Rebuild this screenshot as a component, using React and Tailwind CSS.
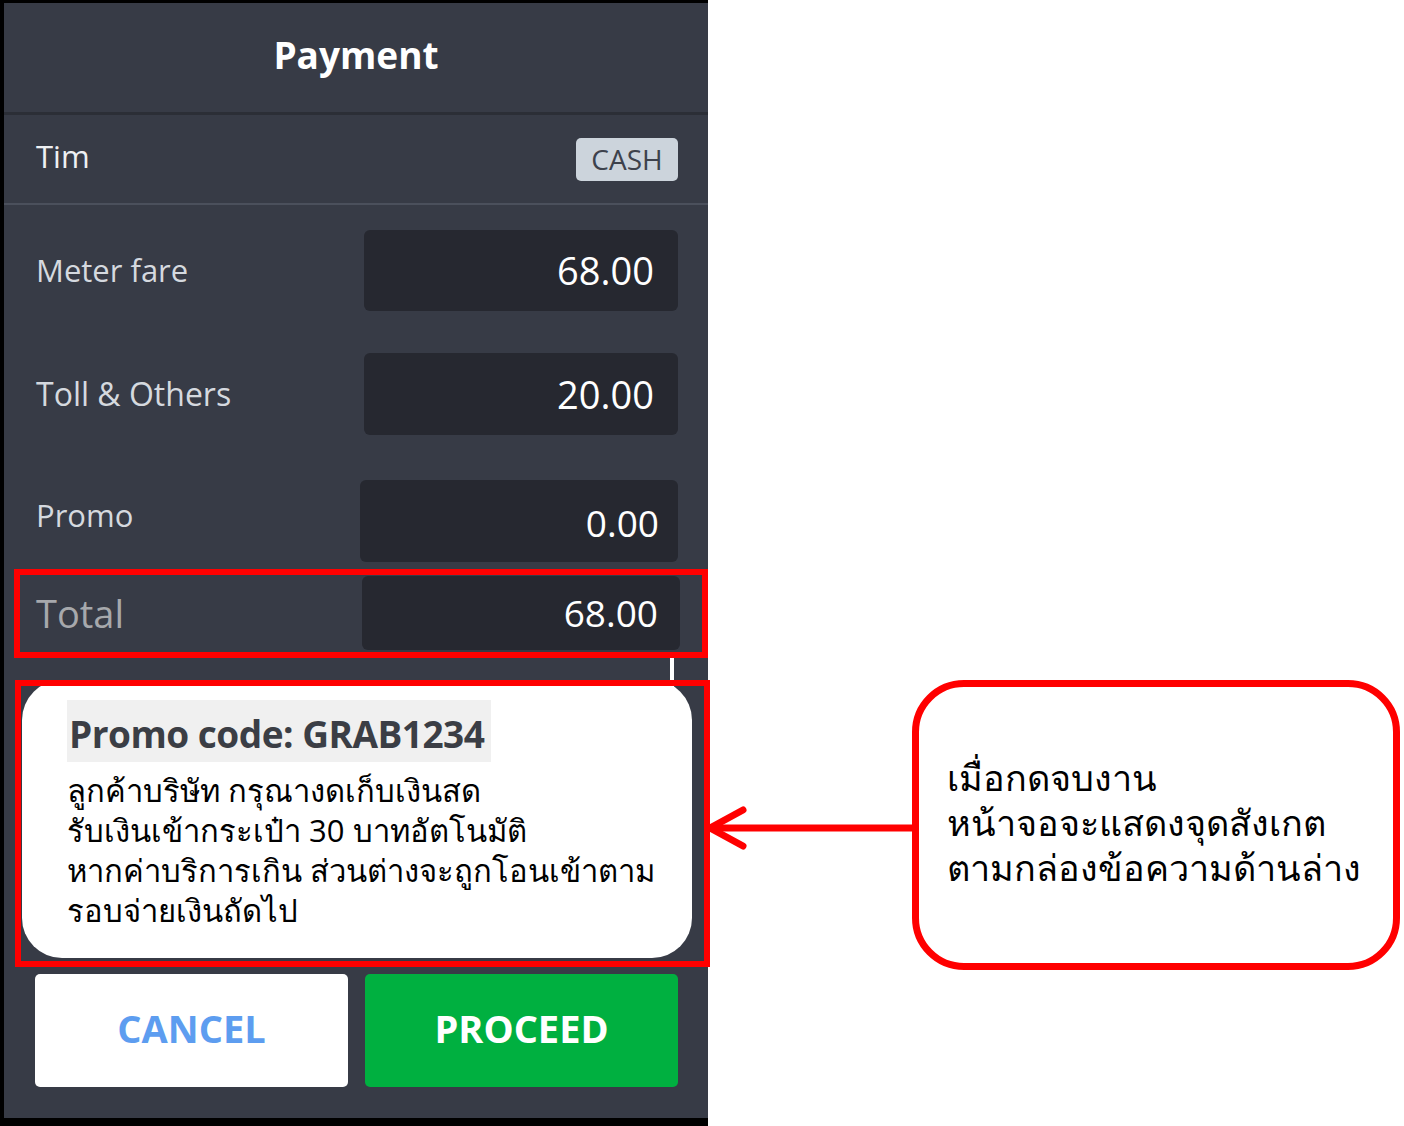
import React from 'react';

const FONT = { fontFamily: '"Open Sans", "Noto Sans", "DejaVu Sans", sans-serif' };

function FareRow({ label, value, boxClass, labelClass }) {
    return (
        <div className="flex items-center">
            <span className={`pl-[32px] ${labelClass}`}>{label}</span>
            <div className={`ml-auto flex items-center justify-end rounded-[6px] bg-[#262830] text-white ${boxClass}`}>
                {value}
            </div>
        </div>
    );
}

export default function App() {
    return (
        <div className="relative flex w-[1404px] h-[1126px] bg-white overflow-hidden" style={FONT}>
            {/* phone screen */}
            <div className="relative w-[708px] h-[1126px] shrink-0 bg-black pt-[3px] pl-[4px] pb-[8px]">
                <div className="relative h-full bg-[#373b46] flex flex-col">
                    <div className="h-[112px] shrink-0 flex items-center justify-center border-b-[3px] border-[#2b2e36]">
                        <h1 className="text-[37px] font-bold text-white -mt-[6px]">Payment</h1>
                    </div>
                    <div className="h-[90px] shrink-0 flex items-center justify-between pl-[32px] pr-[30px] border-b-[2px] border-[#4b505c]">
                        <span className="text-[31px] text-[#eef0f3] -mt-[6px]">Tim</span>
                        <span className="h-[43px] w-[102px] flex items-center justify-center rounded-[5px] bg-[#ccd4dc] text-[28px] text-[#3d424c]">CASH</span>
                    </div>

                    <div className="mt-[25px]">
                        <FareRow label="Meter fare" value="68.00" labelClass="text-[31px] text-[#d5d9df]" boxClass="w-[314px] h-[81px] mr-[30px] pr-[24px] text-[38px]" />
                    </div>
                    <div className="mt-[42px]">
                        <FareRow label="Toll & Others" value="20.00" labelClass="text-[32px] text-[#d5d9df]" boxClass="w-[314px] h-[82px] mr-[30px] pr-[24px] text-[38px]" />
                    </div>
                    <div className="mt-[45px]">
                        <FareRow label="Promo" value="0.00" labelClass="text-[31px] text-[#d5d9df] -mt-[12px]" boxClass="w-[318px] h-[82px] mr-[30px] pr-[19px] pt-[4px] text-[37px]" />
                    </div>
                    <div className="mt-[14px]">
                        <FareRow label="Total" value="68.00" labelClass="text-[38px] text-[#a6a8ac]" boxClass="w-[318px] h-[74px] mr-[28px] pr-[22px] text-[37px]" />
                    </div>

                    {/* promo note card */}
                    <div className="mt-[30px] ml-[18px] w-[670px] h-[278px] rounded-[40px] bg-white pt-[20px] pl-[45px]">
                        <div className="inline-block bg-[#f0f0f0] h-[62px] w-[424px] pl-[2px] pt-[6px] text-[37px] font-bold text-[#3b3e45] tracking-[-0.5px]">
                            Promo code: GRAB1234
                        </div>
                        <div className="mt-[8px] text-[31px] leading-[40px] text-black">
                            <p>ลูกค้าบริษัท กรุณางดเก็บเงินสด</p>
                            <p>รับเงินเข้ากระเป๋า 30 บาทอัตโนมัติ</p>
                            <p>หากค่าบริการเกิน ส่วนต่างจะถูกโอนเข้าตาม</p>
                            <p>รอบจ่ายเงินถัดไป</p>
                        </div>
                    </div>

                    <div className="mt-[16px] flex gap-[17px] pl-[31px]">
                        <button className="w-[313px] h-[113px] rounded-[5px] bg-white pb-[4px] text-[38px] font-bold text-[#5d9df0]">CANCEL</button>
                        <button className="w-[313px] h-[113px] rounded-[5px] bg-[#00b040] pb-[4px] text-[38px] font-bold text-white">PROCEED</button>
                    </div>

                    {/* scroll indicator */}
                    <div className="absolute left-[666px] top-[652px] w-[4px] h-[36px] bg-white" />
                </div>
            </div>

            {/* callout */}
            <div className="ml-[204px] mt-[680px] w-[488px] h-[290px] rounded-[52px] border-[7px] border-[#ff0000] pl-[28px] pt-[68px]">
                <div className="text-[36px] leading-[45px] text-black">
                    <p>เมื่อกดจบงาน</p>
                    <p>หน้าจอจะแสดงจุดสังเกต</p>
                    <p>ตามกล่องข้อความด้านล่าง</p>
                </div>
            </div>

            {/* annotation overlays */}
            <div className="absolute left-[14px] top-[569px] w-[694px] h-[89px] border-[6px] border-[#ff0000]" />
            <div className="absolute left-[15px] top-[680px] w-[695px] h-[287px] border-[6px] border-[#ff0000]" />
            <svg className="absolute left-[700px] top-[800px]" width="215" height="60" viewBox="0 0 215 60">
                <line x1="10" y1="28" x2="213" y2="28" stroke="#ff0000" strokeWidth="7" />
                <polyline points="43,10 10,28 43,46" fill="none" stroke="#ff0000" strokeWidth="7" strokeLinecap="round" strokeLinejoin="round" />
            </svg>
        </div>
    );
}
